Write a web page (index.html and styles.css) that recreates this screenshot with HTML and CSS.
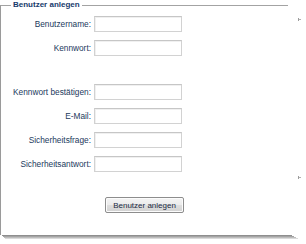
FILE: index.html
```html
<!DOCTYPE html>
<html lang="de">
<head>
    <meta charset="UTF-8">
    <meta name="viewport" content="width=device-width, initial-scale=1.0">
    <title>Benutzer anlegen</title>
    <link rel="stylesheet" href="styles.css">
</head>
<body>

    <div class="page">
        <div class="panel">
            <fieldset class="box">
                <legend>Benutzer anlegen</legend>
                <div class="form">
                    <label for="userName">Benutzername:</label>
                    <input type="text" id="userName">

                    <label for="password">Kennwort:</label>
                    <input type="password" id="password">

                    <div class="gap"></div>

                    <label for="confirmPassword">Kennwort bestätigen:</label>
                    <input type="password" id="confirmPassword">

                    <label for="email">E-Mail:</label>
                    <input type="text" id="email">

                    <label for="question">Sicherheitsfrage:</label>
                    <input type="text" id="question">

                    <label for="answer">Sicherheitsantwort:</label>
                    <input type="text" id="answer">
                </div>
                <div class="actions">
                    <button type="button">Benutzer anlegen</button>
                </div>
            </fieldset>
            <!-- Schatten unter dem Rahmen -->
            <div class="shade s1"></div>
            <div class="shade s2"></div>
            <div class="shade s3"></div>
            <div class="shade s4"></div>
        </div>
        <div class="edge">
            <span class="tick"></span>
            <span class="tick low"></span>
        </div>
    </div>

</body>
</html>
```

FILE: styles.css
```css
body {
    margin: 0;
    background: #fff;
    font-family: "Liberation Sans", Arial, sans-serif;
    font-size: 8.3px;
    color: #22395c;
}
.page {
    display: flex;
}
.panel {
    width: 298px;
}
.box {
    width: 288px;
    box-sizing: border-box;
    margin: 0;
    padding: 6px 0 22px 0;
    border: none;
    border-top: 1px solid #a3a3a3;
    border-left: 1px solid #9a9a9a;
}
.box legend {
    margin-left: 10px;
    padding: 0 2px;
    font-size: 8px;
    line-height: 10px;
    font-weight: bold;
    color: #173a6b;
}
.form {
    display: grid;
    grid-template-columns: 90px 88px;
    column-gap: 3px;
    row-gap: 8px;
    align-items: center;
}
.form label {
    text-align: right;
    white-space: nowrap;
}
.form input {
    height: 16px;
    box-sizing: border-box;
    margin: 0;
    padding: 1px 3px;
    border: 1px solid #d2d2d2;
    border-top-color: #c6c6c6;
    box-shadow: inset 1px 1px 0 #f0f0f0;
    font: inherit;
}
.gap {
    grid-column: 1 / 3;
    height: 12px;
}
.actions {
    margin-top: 25px;
    text-align: center;
}
.actions button {
    width: 79px;
    height: 16px;
    padding: 0;
    border: 1px solid #8d8d8d;
    border-radius: 2px;
    background: linear-gradient(#f4f4f4 0%, #ececec 48%, #dedede 52%, #d2d2d2 100%);
    box-shadow: inset 0 0 0 1px #fcfcfc;
    font-family: "Liberation Sans", Arial, sans-serif;
    font-size: 8px;
    color: #1b2a42;
}
.shade {
    height: 1px;
}
.s1 {
    margin-left: 2px;
    width: 290px;
    background: #8f8f8f;
}
.s2 {
    margin-left: 3px;
    width: 291px;
    background: #a4a4a4;
}
.s3 {
    margin-left: 4px;
    width: 292px;
    background: #bdbdbd;
}
.s4 {
    margin-left: 5px;
    width: 293px;
    background: #dadada;
}
.edge {
    display: flex;
    flex-direction: column;
    padding-top: 18px;
}
.tick {
    width: 3px;
    height: 3px;
    box-sizing: border-box;
    border-left: 1px solid #9d9d9d;
    background: linear-gradient(#b0b0b0, #b0b0b0) center / 100% 1px no-repeat;
}
.tick.low {
    margin-top: 155px;
}
```
